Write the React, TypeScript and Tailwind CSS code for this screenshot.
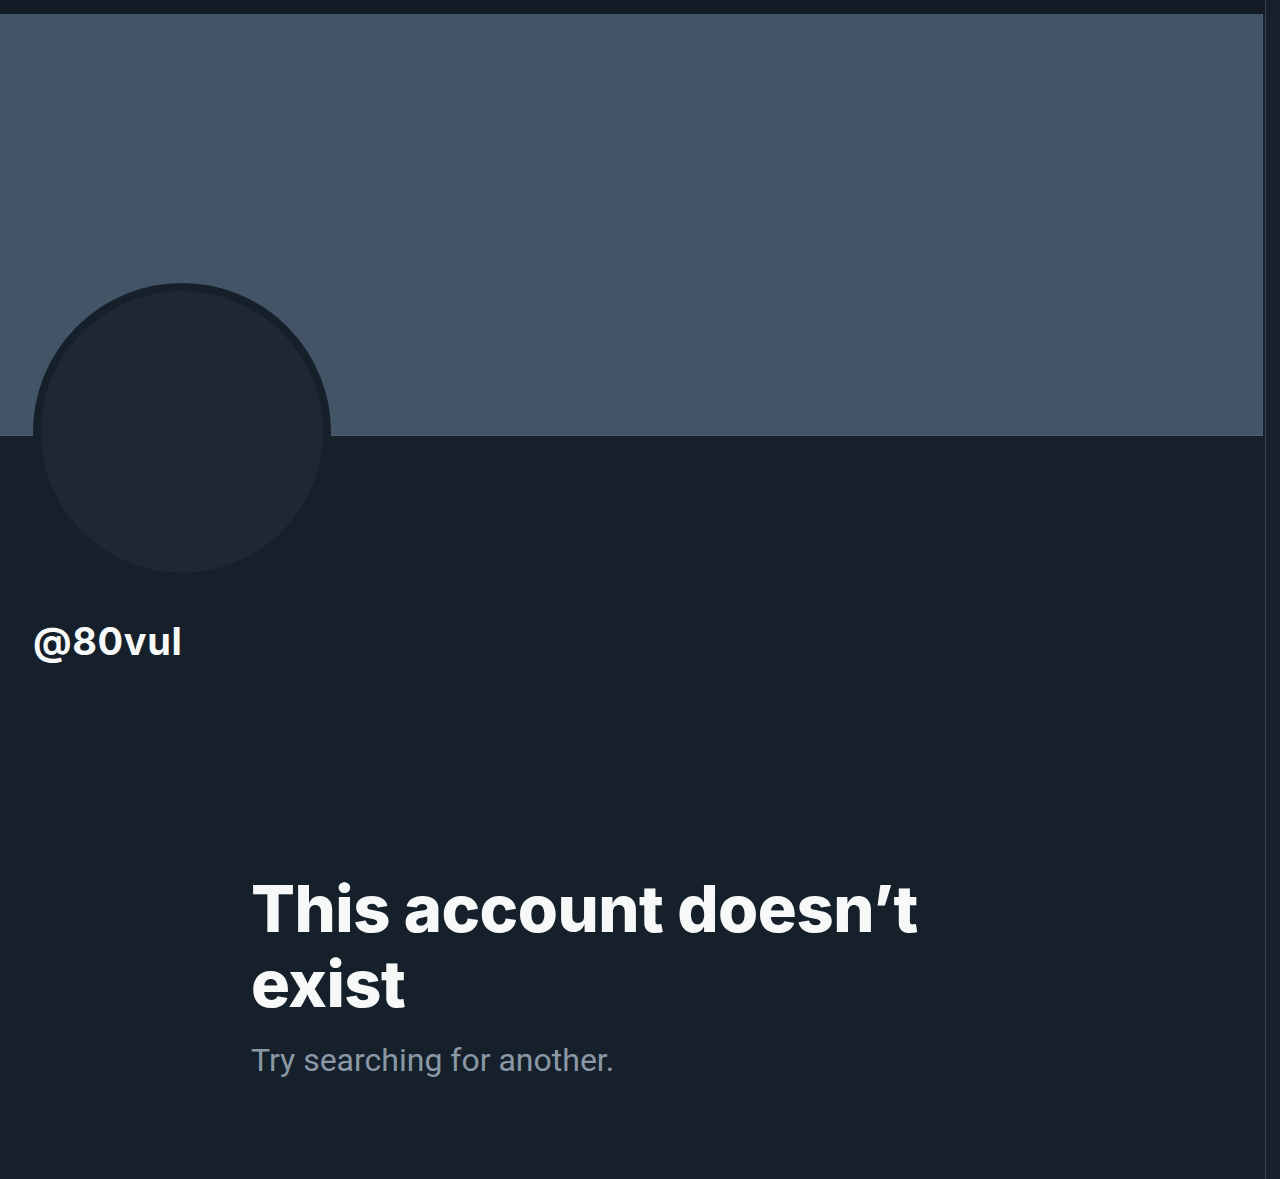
import React, { FC } from "react";

const App: FC = () => {
  return (
    <div className="flex min-h-[1179px] w-full bg-[#15202b] font-['Inter','Liberation_Sans',sans-serif]">
      <main className="flex w-[1266px] flex-col border-r border-[#38444d]">
        <div className="h-[14px] bg-[#131b26]"></div>
        <div className="mr-[2px] h-[422px] border-r border-b border-[#4e5e6f] bg-[#425466]"></div>

        <section className="flex flex-col px-[33px]">
          <div className="-mt-[153px] h-[298px] w-[298px] rounded-full border-[8px] border-[#15202b] bg-[#1e2732]"></div>
          <div className="mt-[38px] text-[38px] font-bold leading-[44px] tracking-[0.6px] text-[#f7f9f9]">
            @80vul
          </div>
        </section>

        <section className="mt-[208px] ml-[251px] w-[706px]">
          <h1 className="text-[65px] font-extrabold leading-[75px] tracking-[-0.5px] text-[#f7f9f9]">
            This account doesn’t exist
          </h1>
          <p className="mt-[18px] font-['Roboto',sans-serif] text-[32px] leading-[42px] text-[#8b98a5]">
            Try searching for another.
          </p>
        </section>
      </main>
      <div className="flex-1 bg-[#16202b]"></div>
    </div>
  );
};

export default App;
